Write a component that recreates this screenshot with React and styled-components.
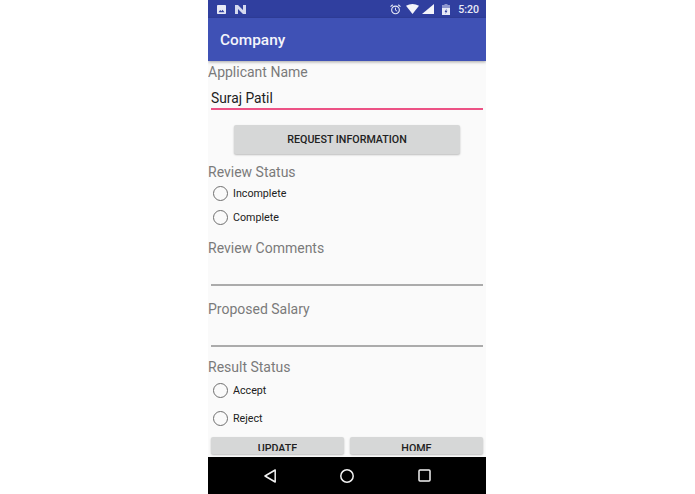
import React from "react";
import styled, { createGlobalStyle } from "styled-components";

const GlobalStyle = createGlobalStyle`
  html, body {
    margin: 0;
    padding: 0;
    background: #fff;
  }
  body {
    font-family: Roboto, "Liberation Sans", sans-serif;
  }
`;

const Phone = styled.div`
  width: 278px;
  height: 494px;
  margin-left: 208px;
  display: flex;
  flex-direction: column;
  background: #fafafa;
  overflow: hidden;
`;

const StatusBar = styled.div`
  height: 18px;
  flex: none;
  display: flex;
  align-items: center;
  padding: 0 7px 0 9px;
  background: #303f9f;
  color: #e8eaf6;
`;

const StatusGroup = styled.div`
  display: flex;
  align-items: center;
  margin-left: ${props => (props.$right ? "auto" : "0")};
`;

const StatusIcon = styled.svg`
  display: block;
  flex: none;
  margin-left: ${props => props.$gap || 0}px;
`;

const Clock = styled.span`
  font-size: 10.6px;
  font-weight: 500;
  margin-left: 8px;
`;

const AppBar = styled.div`
  height: 43px;
  flex: none;
  display: flex;
  align-items: center;
  padding-left: 12px;
  background: #3f51b5;
  color: #f4f5fb;
  font-size: 15.4px;
  font-weight: 500;
  box-shadow: 0 1px 3px rgba(0, 0, 0, 0.35);
  position: relative;
`;

const Content = styled.div`
  flex: 1;
  min-height: 0;
  overflow: hidden;
  padding-top: 1px;
  display: flex;
  flex-direction: column;
  & > * {
    flex-shrink: 0;
  }
`;

const Label = styled.div`
  height: 20px;
  margin-top: ${props => props.$top || 0}px;
  font-size: 14px;
  line-height: 20px;
  color: #7a7a7a;
`;

const Field = styled.div`
  height: 28px;
  margin: 0 3px;
  padding-top: 5px;
  box-sizing: border-box;
  display: flex;
  align-items: center;
  border-bottom: 2px solid ${props => (props.$active ? "#ec5285" : "#ababab")};
  font-size: 13.8px;
  color: #212121;
`;

const Button = styled.div`
  box-sizing: border-box;
  height: ${props => props.$h}px;
  flex: ${props => (props.$grow ? 1 : "none")};
  display: flex;
  justify-content: center;
  align-items: ${props => (props.$cut ? "flex-start" : "center")};
  padding-top: ${props => (props.$cut ? "5px" : "0")};
  background: #d6d7d7;
  border-radius: 2px;
  box-shadow: 0 1px 2px rgba(0, 0, 0, 0.25);
  font-size: 10.7px;
  font-weight: 500;
  color: #212121;
`;

const CutText = styled.span`
  display: block;
  height: 9px;
  line-height: 13px;
  overflow: hidden;
`;

const RequestRow = styled.div`
  margin: 15px 26px 0;
`;

const RadioRow = styled.div`
  height: ${props => props.$h}px;
  display: flex;
  align-items: center;
  padding-left: 5px;
  gap: 5px;
  font-size: 10.7px;
  color: #212121;
`;

const RadioCircle = styled.span`
  box-sizing: border-box;
  width: 15px;
  height: 15px;
  border: 1.5px solid #6f6f6f;
  border-radius: 50%;
  flex: none;
`;

const ButtonRow = styled.div`
  display: flex;
  gap: 6px;
  margin: 3px 3px 0;
`;

const NavBar = styled.div`
  height: 37px;
  flex: none;
  display: flex;
  align-items: center;
  justify-content: space-between;
  padding: 0 55px 0 56px;
  background: #000;
`;

const Radio = ({ label, h }) => (
  <RadioRow $h={h}>
    <RadioCircle />
    {label}
  </RadioRow>
);

export default function App() {
  return (
    <>
      <GlobalStyle />
      <Phone>
        <StatusBar>
          <StatusGroup>
            <StatusIcon width="9" height="9" viewBox="0 0 9 9">
              <rect width="9" height="9" rx="0.8" fill="#e8eaf6" />
              <path d="M1.5 7.3 L3.2 5 L4.4 6.3 L5.5 4.8 L7.5 7.3 Z" fill="#303f9f" />
            </StatusIcon>
            <StatusIcon $gap={9} width="11" height="9" viewBox="0 0 11 9">
              <path d="M0 0 H3 L8 5 V0 H11 V9 H8 L3 4 V9 H0 Z" fill="#d5d9ee" />
            </StatusIcon>
          </StatusGroup>
          <StatusGroup $right>
            <StatusIcon width="11" height="11" viewBox="0 0 12 12" fill="none" stroke="#e8eaf6">
              <circle cx="6" cy="6.5" r="4.2" strokeWidth="1.2" />
              <path d="M6 4 V6.7 L7.8 7.8" strokeWidth="1" />
              <path d="M0.6 2.8 L3 0.8 M11.4 2.8 L9 0.8" strokeWidth="1.2" />
            </StatusIcon>
            <StatusIcon $gap={5} width="13" height="10" viewBox="0 0 13 10">
              <path d="M0 1.8 Q6.5 -1.6 13 1.8 L6.5 10 Z" fill="#f4f5fb" />
            </StatusIcon>
            <StatusIcon $gap={3} width="12" height="10" viewBox="0 0 12 10">
              <path d="M0 10 L12 0 V10 Z" fill="#f4f5fb" />
            </StatusIcon>
            <StatusIcon $gap={8} width="8" height="11" viewBox="0 0 8 11">
              <path d="M2.5 0 H5.5 V1 H8 V11 H0 V1 H2.5 Z" fill="#8f97cf" />
              <path d="M0 4 H8 V11 H0 Z" fill="#e8eaf6" />
              <path d="M4.6 4.5 L2.6 8 H3.8 L3.4 10 L5.5 6.8 H4.2 Z" fill="#303f9f" />
            </StatusIcon>
            <Clock>5:20</Clock>
          </StatusGroup>
        </StatusBar>
        <AppBar>Company</AppBar>
        <Content>
          <Label>Applicant Name</Label>
          <Field $active>Suraj Patil</Field>
          <RequestRow>
            <Button $h={29}>REQUEST INFORMATION</Button>
          </RequestRow>
          <Label $top={8}>Review Status</Label>
          <Radio label="Incomplete" h={23} />
          <Radio label="Complete" h={25} />
          <Label $top={8}>Review Comments</Label>
          <Field />
          <Label $top={13}>Proposed Salary</Label>
          <Field />
          <Label $top={10}>Result Status</Label>
          <Radio label="Accept" h={26} />
          <Radio label="Reject" h={31} />
          <ButtonRow>
            <Button $grow $cut $h={17}><CutText>UPDATE</CutText></Button>
            <Button $grow $cut $h={17}><CutText>HOME</CutText></Button>
          </ButtonRow>
        </Content>
        <NavBar>
          <svg width="12" height="14" viewBox="0 0 12 14" fill="none" stroke="#f2f2f2" strokeWidth="1.5">
            <path d="M11.2 1 V13 L1 7 Z" strokeLinejoin="round" />
          </svg>
          <svg width="14" height="14" viewBox="0 0 14 14" fill="none" stroke="#f2f2f2" strokeWidth="1.5">
            <circle cx="7" cy="7" r="6.2" />
          </svg>
          <svg width="13" height="13" viewBox="0 0 13 13" fill="none" stroke="#f2f2f2" strokeWidth="1.5">
            <rect x="1" y="1" width="11" height="11" rx="1" />
          </svg>
        </NavBar>
      </Phone>
    </>
  );
}
